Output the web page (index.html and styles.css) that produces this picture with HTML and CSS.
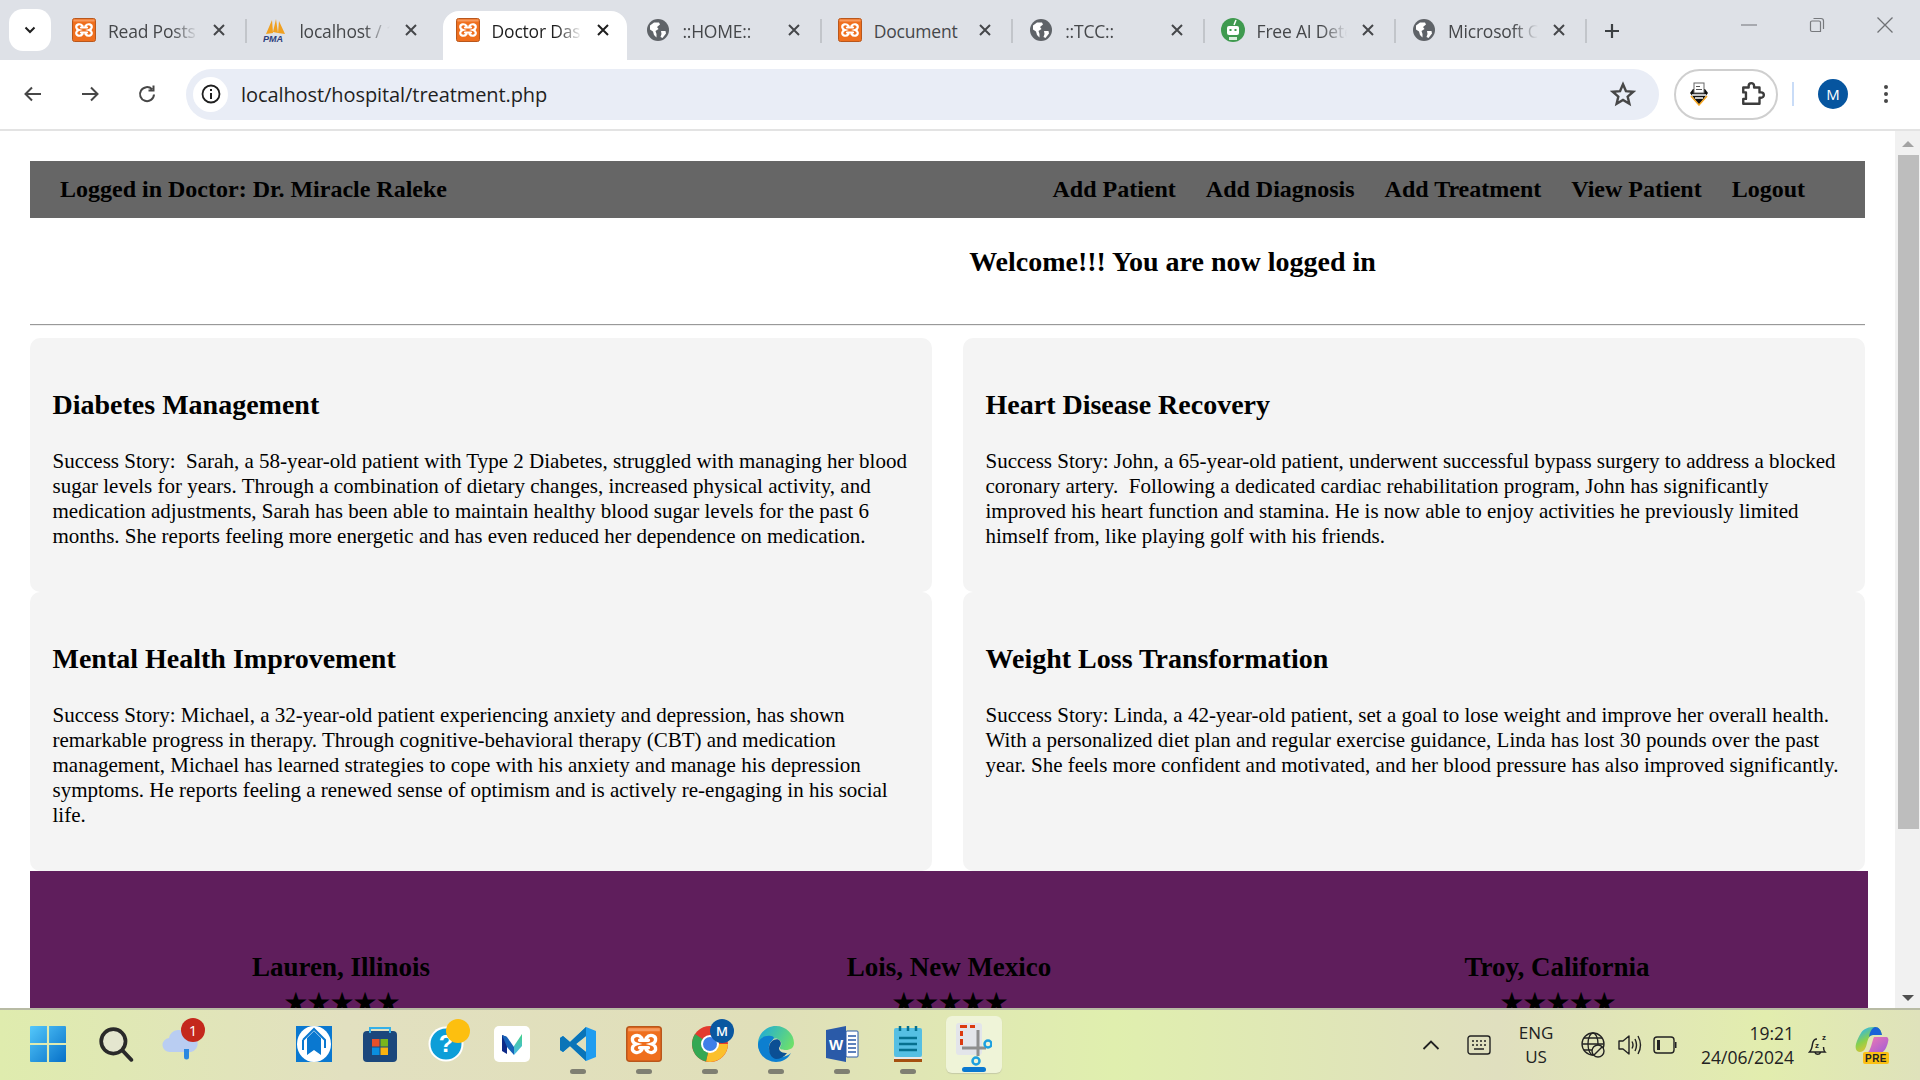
FILE: index.html
```html
<!DOCTYPE html>
<html lang="en">
<head>
<meta charset="utf-8">
<title>Doctor Dashboard</title>
<link rel="stylesheet" href="styles.css">
</head>
<body>
<svg class="defs" width="0" height="0" aria-hidden="true">
  <defs>
    <symbol id="xampp" viewBox="0 0 24 24">
      <rect x="0.500" y="0.500" width="23" height="23" rx="2" fill="#ef6f1e" stroke="#b9571c"/>
      <rect x="1.500" y="1.500" width="21" height="2" fill="#f79a5e"/>
      <path d="M10.500 8C8 4.800 3.800 6.500 4.300 9.500C4.600 11.300 7 12 7 12C7 12 4.600 12.700 4.300 14.500C3.800 17.500 8 19.200 10.500 16M13.500 8C16 4.800 20.200 6.500 19.700 9.500C19.400 11.300 17 12 17 12C17 12 19.400 12.700 19.700 14.500C20.200 17.500 16 19.200 13.500 16M9 9.500H15M9 14.500H15" fill="none" stroke="#fff" stroke-width="2.200" stroke-linecap="round"/>
    </symbol>
    <symbol id="globe" viewBox="0 0 24 24">
      <circle cx="12" cy="12" r="11" fill="#5f6368"/>
      <path d="M4 7.500L8 4.500H13L14 6.500L11 9L12.500 11L9.500 13L10.500 16V19.500L8 17L7 13.500L4 11.500ZM15 13H19.500L20 15.500L16.500 20L14.500 19L15.500 16Z" fill="#fff"/>
    </symbol>
    <symbol id="close" viewBox="0 0 14 14">
      <path d="M2 2L12 12M12 2L2 12" fill="none" stroke="currentColor" stroke-width="2"/>
    </symbol>
  </defs>
</svg>

<header class="tabstrip">
  <div class="tab-menu">
    <svg class="chev" viewBox="0 0 12 8"><path d="M1.500 1.500L6 6L10.500 1.500" fill="none" stroke="#1f1f1f" stroke-width="2"/></svg>
  </div>
  <div class="tab sep">
    <svg class="fav"><use href="#xampp"/></svg><span class="tab-title">Read Posts</span>
    <svg class="x"><use href="#close"/></svg>
  </div>
  <div class="tab">
    <svg class="fav" viewBox="0 0 24 24">
      <path d="M3 16L9 2L10 15ZM10 14L13 1L15 15ZM15 15L16 3L22 16Z" fill="#f0a020"/>
      <text x="0" y="24" class="pma">PMA</text>
    </svg><span class="tab-title">localhost / 127</span>
    <svg class="x"><use href="#close"/></svg>
  </div>
  <div class="tab active">
    <svg class="fav"><use href="#xampp"/></svg><span class="tab-title">Doctor Dashboard</span>
    <svg class="x"><use href="#close"/></svg>
  </div>
  <div class="tab sep">
    <svg class="fav"><use href="#globe"/></svg><span class="tab-title">::HOME::</span>
    <svg class="x"><use href="#close"/></svg>
  </div>
  <div class="tab sep">
    <svg class="fav"><use href="#xampp"/></svg><span class="tab-title doc">Document</span>
    <svg class="x"><use href="#close"/></svg>
  </div>
  <div class="tab sep">
    <svg class="fav"><use href="#globe"/></svg><span class="tab-title">::TCC::</span>
    <svg class="x"><use href="#close"/></svg>
  </div>
  <div class="tab sep">
    <svg class="fav" viewBox="0 0 24 24">
      <circle cx="12" cy="12" r="12" fill="#3f9a4f"/>
      <rect x="6" y="8" width="12" height="9" rx="2" fill="#fff"/>
      <rect x="8.500" y="11" width="2" height="2" fill="#3f9a4f"/><rect x="13.500" y="11" width="2" height="2" fill="#3f9a4f"/>
      <path d="M13 7L15 2" stroke="#fff" stroke-width="1.500"/>
      <path d="M8 19H16V22H8Z" fill="#d9eedc"/>
    </svg><span class="tab-title">Free AI Detector</span>
    <svg class="x"><use href="#close"/></svg>
  </div>
  <div class="tab sep">
    <svg class="fav"><use href="#globe"/></svg><span class="tab-title">Microsoft Copilot</span>
    <svg class="x"><use href="#close"/></svg>
  </div>
  <svg class="newtab" viewBox="0 0 16 16"><path d="M8 1V15M1 8H15" fill="none" stroke="#3c4043" stroke-width="2.200"/></svg>
  <div class="winctl">
    <svg viewBox="0 0 16 16"><path d="M0 8H16" stroke="#8a8c90" stroke-width="1.300"/></svg>
    <svg viewBox="0 0 16 16"><path d="M1.500 5.500a1.500 1.500 0 0 1 1.500-1.500h7a1.500 1.500 0 0 1 1.500 1.500v9H3a1.500 1.500 0 0 1-1.500-1.500ZM4.500 1.500H12A2.500 2.500 0 0 1 14.500 4V12" fill="none" stroke="#77797d" stroke-width="1.200"/></svg>
    <svg viewBox="0 0 16 16"><path d="M0.500 0.500L15.500 15.500M15.500 0.500L0.500 15.500" stroke="#6f7175" stroke-width="1.300"/></svg>
  </div>
</header>

<nav class="toolbar">
  <svg class="tool" viewBox="0 0 24 24"><path d="M20 12H5M11 5.500L4.500 12L11 18.500" fill="none" stroke="#474747" stroke-width="2"/></svg>
  <svg class="tool" viewBox="0 0 24 24"><path d="M4 12H19M13 5.500L19.500 12L13 18.500" fill="none" stroke="#474747" stroke-width="2"/></svg>
  <svg class="tool" viewBox="0 0 24 24"><path d="M19 12.500A7 7 0 1 1 17 7.200M18.500 3.500V8.500H13.500" fill="none" stroke="#474747" stroke-width="2"/></svg>
  <div class="omnibox">
    <span class="info">
      <svg viewBox="0 0 20 20"><circle cx="10" cy="10" r="8.500" fill="none" stroke="#1f1f1f" stroke-width="1.800"/><path d="M10 9V15M10 5V7" stroke="#1f1f1f" stroke-width="2"/></svg>
    </span>
    <span class="url">localhost/hospital/treatment.php</span>
    <svg class="star" viewBox="0 0 24 24"><path d="M12 3L14.700 9.300L21.500 9.900L16.300 14.400L17.900 21L12 17.500L6.100 21L7.700 14.400L2.500 9.900L9.300 9.300Z" fill="none" stroke="#474747" stroke-width="2.200"/></svg>
  </div>
  <div class="ext-pill">
    <svg class="ext nib" viewBox="0 0 20 24">
      <path d="M10 23L1 11L4 7H16L19 11Z" fill="#111"/><path d="M2 14L10 23L18 14" fill="none" stroke="#f5a623" stroke-width="1.500"/>
      <rect x="5" y="1" width="10" height="10" fill="#fff" stroke="#666"/><path d="M7 4.500H11M7 7.500H13" stroke="#555"/><path d="M3 13H17M6 16H14" stroke="#fff" stroke-width="1.500"/>
    </svg>
    <svg class="ext" viewBox="0 0 24 24"><path d="M3 6H8V4.500a2.500 2.500 0 0 1 5 0V6H18V10.500H19.500a2.500 2.500 0 0 1 0 5H18V21H3V16.500H5.500V10.500H3Z" fill="none" stroke="#3c3c3c" stroke-width="2.200" stroke-linejoin="round"/></svg>
  </div>
  <span class="tool-sep"></span>
  <span class="avatar">M</span>
  <svg class="dots" viewBox="0 0 4 20"><circle cx="2" cy="3" r="2" fill="#474747"/><circle cx="2" cy="10" r="2" fill="#474747"/><circle cx="2" cy="17" r="2" fill="#474747"/></svg>
</nav>

<div class="viewport">
  <main class="page">
    <div class="topnav">
      <span>Logged in Doctor: Dr. Miracle Raleke</span>
      <div class="navlinks">
        <span>Add Patient</span>
        <span>Add Diagnosis</span>
        <span>Add Treatment</span>
        <span>View Patient</span>
        <span>Logout</span>
      </div>
    </div>
    <h3 class="welcome">Welcome!!! You are now logged in</h3>
    <hr class="rule">
    <section class="cards">
      <article class="card">
        <h2>Diabetes Management</h2>
        <p>Success Story: &nbsp;Sarah, a 58-year-old patient with Type 2 Diabetes, struggled with managing her blood sugar levels for years. Through a combination of dietary changes, increased physical activity, and medication adjustments, Sarah has been able to maintain healthy blood sugar levels for the past 6 months. She reports feeling more energetic and has even reduced her dependence on medication.</p>
      </article>
      <article class="card">
        <h2>Heart Disease Recovery</h2>
        <p>Success Story: John, a 65-year-old patient, underwent successful bypass surgery to address a blocked coronary artery. &nbsp;Following a dedicated cardiac rehabilitation program, John has significantly improved his heart function and stamina. He is now able to enjoy activities he previously limited himself from, like playing golf with his friends.</p>
      </article>
      <article class="card">
        <h2>Mental Health Improvement</h2>
        <p>Success Story: Michael, a 32-year-old patient experiencing anxiety and depression, has shown remarkable progress in therapy. Through cognitive-behavioral therapy (CBT) and medication management, Michael has learned strategies to cope with his anxiety and manage his depression symptoms. He reports feeling a renewed sense of optimism and is actively re-engaging in his social life.</p>
      </article>
      <article class="card">
        <h2>Weight Loss Transformation</h2>
        <p>Success Story: Linda, a 42-year-old patient, set a goal to lose weight and improve her overall health. With a personalized diet plan and regular exercise guidance, Linda has lost 30 pounds over the past year. She feels more confident and motivated, and her blood pressure has also improved significantly.</p>
      </article>
    </section>
    <section class="reviews">
      <div class="review"><h3>Lauren, Illinois</h3><div class="stars">★★★★★</div></div>
      <div class="review"><h3>Lois, New Mexico</h3><div class="stars">★★★★★</div></div>
      <div class="review"><h3>Troy, California</h3><div class="stars">★★★★★</div></div>
    </section>
  </main>
  <aside class="scrollbar">
    <span class="arrow up"></span>
    <span class="thumb"></span>
    <span class="arrow down"></span>
  </aside>
</div>

<footer class="taskbar">
  <div class="slot">
    <svg class="tb" viewBox="0 0 34 34">
      <defs><linearGradient id="w" x1="0" y1="0" x2="1" y2="1"><stop offset="0" stop-color="#54c8fb"/><stop offset="1" stop-color="#0670c8"/></linearGradient></defs>
      <path d="M0 1a1 1 0 0 1 1-1H16V16H0ZM18 0H33a1 1 0 0 1 1 1V16H18ZM0 18H16V34H1a1 1 0 0 1-1-1ZM18 18H34V33a1 1 0 0 1-1 1H18Z" fill="url(#w)"/>
    </svg>
  </div>
  <div class="slot search">
    <svg class="tb" viewBox="0 0 34 34"><circle cx="14.500" cy="14.500" r="11.500" fill="#e4e6cf" stroke="#2a2a2a" stroke-width="3.500"/><path d="M23 23L31.500 32" stroke="#2a2a2a" stroke-width="3.500" stroke-linecap="round"/></svg>
  </div>
  <div class="slot">
    <svg class="tb" viewBox="0 0 36 34"><path d="M8 25a7 7 0 0 1-1-14a10 10 0 0 1 19-2a8 8 0 0 1 3 16Z" fill="#b9cdf2"/><path d="M22 22H27V30a2.500 2.500 0 0 1-5 0Z" fill="#2b88e0"/></svg>
    <span class="badge red">1</span>
  </div>
  <div class="slot-gap"></div>
  <div class="slot">
    <svg class="tb" viewBox="0 0 36 36"><rect width="36" height="36" fill="#0a78d0"/><ellipse cx="18" cy="18" rx="17" ry="18" fill="#fff"/><path d="M11 12L18 5L25 12V29L18 24L11 29Z" fill="#0a78d0"/><path d="M7 14L18 3L29 14V22" fill="none" stroke="#0a78d0" stroke-width="2"/><path d="M7 14V24" stroke="#0a78d0" stroke-width="2"/></svg>
  </div>
  <div class="slot">
    <svg class="tb" viewBox="0 0 36 36"><rect x="1" y="5" width="34" height="31" rx="4" fill="#1b477c"/><path d="M8 7V2H28V7" fill="none" stroke="#35b0e8" stroke-width="2"/><rect x="10" y="13" width="7.500" height="7.500" fill="#e6502a"/><rect x="18.500" y="13" width="7.500" height="7.500" fill="#7ab51d"/><rect x="10" y="21.500" width="7.500" height="7.500" fill="#0a8ee0"/><rect x="18.500" y="21.500" width="7.500" height="7.500" fill="#fbb20e"/></svg>
  </div>
  <div class="slot">
    <svg class="tb" viewBox="0 0 36 36"><circle cx="18" cy="18" r="17.500" fill="#fff"/><circle cx="18" cy="18" r="15.500" fill="#0d9ed8"/><text x="18" y="26" class="help">?</text></svg>
    <span class="badge yellow"></span>
  </div>
  <div class="slot">
    <svg class="tb" viewBox="0 0 36 36">
      <defs><linearGradient id="m" x1="0" y1="0" x2="0" y2="1"><stop offset="0" stop-color="#43d08a"/><stop offset="1" stop-color="#4bb8e8"/></linearGradient></defs>
      <rect width="36" height="36" rx="5" fill="#fff"/>
      <path d="M8 9L13 11V28L8 25Z" fill="#0d2a88"/>
      <path d="M8 9L13 11L20 21L20 29L13 21Z" fill="#1662b8"/>
      <path d="M28 8V20L20 29V20Z" fill="url(#m)"/>
    </svg>
  </div>
  <div class="slot on">
    <svg class="tb" viewBox="0 0 36 36"><path d="M26 1L36 5V31L26 35L10 20L3 26L0 24V12L3 10L10 16ZM26 10L16 18L26 26Z" fill="#1f9cf0"/><path d="M26 1L10 16L3 10L0 12V24L3 26L10 20L26 35V26L16 18L26 10Z" fill="#0a74b8"/></svg>
  </div>
  <div class="slot on">
    <svg class="tb"><use href="#xampp"/></svg>
  </div>
  <div class="slot on">
    <svg class="tb" viewBox="0 0 36 36"><circle cx="18" cy="18" r="18" fill="#e33b2e"/><path d="M18 18L36 18A18 18 0 0 1 14 35.500Z" fill="#fbc02d"/><path d="M18 18L14 35.500A18 18 0 0 1 3 8Z" fill="#34a853"/><circle cx="18" cy="18" r="9" fill="#fff"/><circle cx="18" cy="18" r="7" fill="#3f7fe8"/></svg>
    <span class="badge blue">M</span>
  </div>
  <div class="slot on">
    <svg class="tb" viewBox="0 0 36 36">
      <defs><linearGradient id="e" x1="0" y1="0" x2="1" y2="0.500"><stop offset="0" stop-color="#1aa7e0"/><stop offset="1" stop-color="#6ee06a"/></linearGradient></defs>
      <path d="M0 18C0 8 8 0 18 0C28 0 36 8 36 17C36 22 32 24 28 24C24 24 21 23 22 21C24 19 24 15 20 13C13 11 8 17 8 22C8 27 10 30 12 33C5 31 0 25 0 18Z" fill="url(#e)"/>
      <path d="M0 18C1 12 7 9 13 10C19 11 14 14 12 17C9 23 12 31 22 31C27 31 31 29 33 27C30 33 24 36 18 36C8 36 0 28 0 18Z" fill="#0d7fd0"/>
      <path d="M11 22C11 14 20 11 22 15C24 18 22 20 21 22C21 26 25 27 29 27C26 31 22 33 18 33C13 32 11 27 11 22Z" fill="#0b4f94"/>
    </svg>
  </div>
  <div class="slot on">
    <svg class="tb" viewBox="0 0 32 36"><path d="M0 4L20 0V36L0 32Z" fill="#2a5aa8"/><rect x="20" y="5" width="12" height="26" rx="1" fill="#fff" stroke="#2a5aa8"/><path d="M22 10H30M22 14H30M22 18H30M22 22H30M22 26H30" stroke="#2a5aa8" stroke-width="1.500"/><text x="10" y="24" class="word">W</text></svg>
  </div>
  <div class="slot on">
    <svg class="tb" viewBox="0 0 28 36"><rect y="2" width="28" height="29" rx="2" fill="#55bfe3"/><path d="M0 31H28V36H0Z" fill="#a5500f"/><path d="M0 31H28V33H0Z" fill="#e8e8e8"/><path d="M6 0V5M14 0V5M22 0V5" stroke="#05708f" stroke-width="2.500"/><path d="M5 12H23M5 18H23M5 24H23" stroke="#05708f" stroke-width="2.500"/></svg>
  </div>
  <div class="slot snip">
    <svg class="tb" viewBox="0 0 36 44"><rect x="0" y="1" width="26" height="32" rx="3" fill="#e3e5ea"/><path d="M4 3H11V6H4ZM14 3H19V6H14ZM4 9H7V14H4ZM4 17H7V23H4Z" fill="#dc3a10"/><path d="M22 8V26M6 26H30M22 26V34" stroke="#8e8e8e" stroke-width="3"/><circle cx="32" cy="22" r="3.500" fill="none" stroke="#1ca0e0" stroke-width="2.500"/><circle cx="20" cy="39" r="3.500" fill="none" stroke="#1ca0e0" stroke-width="2.500"/></svg>
  </div>

  <div class="tray">
    <svg class="t-chev" viewBox="0 0 18 10"><path d="M1.500 9L9 1.500L16.500 9" fill="none" stroke="#222" stroke-width="1.800"/></svg>
    <svg class="t-key" viewBox="0 0 24 20"><rect x="1" y="1" width="22" height="18" rx="2.500" fill="none" stroke="#222" stroke-width="1.400"/><path d="M5 6H7M9 6H11M13 6H15M17 6H19M5 10H7M9 10H11M13 10H15M17 10H19M7 14H17" stroke="#222" stroke-width="1.500"/></svg>
    <div class="lang"><span>ENG</span><span>US</span></div>
    <svg class="t-globe" viewBox="0 0 24 28"><circle cx="12" cy="13" r="11" fill="none" stroke="#222" stroke-width="1.300"/><ellipse cx="12" cy="13" rx="5" ry="11" fill="none" stroke="#222" stroke-width="1.300"/><path d="M1 13H23M3 7H21M3 19H21" stroke="#222" stroke-width="1.300"/><circle cx="17" cy="20" r="6" fill="#e1e3bd" stroke="#222" stroke-width="1.400"/><path d="M13 24L21 16" stroke="#222" stroke-width="1.400"/></svg>
    <svg class="t-vol" viewBox="0 0 24 24"><path d="M1 8H5L11 3V21L5 16H1Z" fill="none" stroke="#222" stroke-width="1.400" stroke-linejoin="round"/><path d="M14 8.500Q16 12 14 15.500M17 6Q20 12 17 18M20 3Q25 12 20 21" fill="none" stroke="#222" stroke-width="1.400"/></svg>
    <svg class="t-bat" viewBox="0 0 24 20"><rect x="1" y="2" width="20" height="16" rx="3" fill="none" stroke="#222" stroke-width="1.400"/><rect x="4" y="5" width="3" height="10" fill="#222"/><path d="M22 7H23.500V13H22Z" fill="#222"/></svg>
    <div class="clock"><span>19:21</span><span>24/06/2024</span></div>
    <svg class="t-bell" viewBox="0 0 22 26"><path d="M9 7C6 7 5 9 4.500 12C4 16 3.500 18 1.500 20H17C15.500 18.500 15.500 17 15.500 15M7 20.500a3 3 0 0 0 5.500 0" fill="none" stroke="#222" stroke-width="1.500"/><text x="7" y="16" class="zz">z</text><text x="14" y="8" class="zz">z</text></svg>
    <svg class="t-copilot" viewBox="0 0 34 38">
      <defs>
        <linearGradient id="c" x1="0" y1="0.200" x2="0.500" y2="1"><stop offset="0" stop-color="#2fb8e8"/><stop offset=".5" stop-color="#8bd04a"/><stop offset="1" stop-color="#f0c030"/></linearGradient>
        <linearGradient id="c2" x1="0" y1="0" x2="1" y2="1"><stop offset="0" stop-color="#f07ab0"/><stop offset="1" stop-color="#a05cd8"/></linearGradient>
      </defs>
      <path d="M6 7C9 2 14 1 20 1C24 1 26 4 27 9H18C15 9 13 12 12 17C11 22 9 26 5 26C1 26 0 22 1 18C2 14 4 10 6 7Z" fill="url(#c)"/>
      <path d="M20 1C24 1 26 4 27 9H18C16 9 15 10 14 11C15 5 17 2 20 1Z" fill="#1a62d8"/>
      <path d="M19 11H31C33 11 34 13 33 16C32 21 29 27 25 27H12C16 25 17 15 19 11Z" fill="url(#c2)"/>
      <rect x="8" y="26" width="26" height="12" rx="2" fill="#fbc013"/>
      <text x="21" y="36" class="pre">PRE</text>
    </svg>
  </div>
</footer>
</body>
</html>
```

FILE: styles.css
```css
* { box-sizing: border-box; }
html, body { margin: 0; height: 100%; overflow: hidden; }
body {
  display: flex;
  flex-direction: column;
  width: 1920px;
  height: 1080px;
  background: #fff;
  font-family: "Liberation Serif", "Times New Roman", serif;
  color: #000;
}
.defs { position: absolute; }

/* Tab strip */
.tabstrip {
  height: 60px;
  flex: none;
  display: flex;
  align-items: flex-end;
  background: #dee1e7;
  padding-left: 9px;
  font-family: "Open Sans", "Noto Sans", sans-serif;
}
.tab-menu {
  width: 42px;
  height: 42px;
  margin: 0 5px 9px 0;
  background: #fff;
  border-radius: 14px;
  display: flex;
  align-items: center;
  justify-content: center;
}
.chev { width: 12px; height: 8px; }
.tab {
  position: relative;
  width: 191.400px;
  height: 49px;
  flex: none;
  display: flex;
  align-items: center;
  padding: 0 21px 11px 16px;
  color: #45474a;
  border-radius: 16px 16px 0 0;
  font-size: 17.500px;
}
.tab.sep::after {
  content: "";
  position: absolute;
  right: 0;
  top: 8px;
  width: 2px;
  height: 24px;
  background: #c2c5ca;
}
.tab.active {
  width: 184px;
  margin: 0 3.800px;
  padding: 0 17px 11px 13px;
  background: #fff;
  color: #1f1f1f;
}
.fav { width: 24px; height: 24px; flex: none; }
.tab-title {
  flex: 1;
  min-width: 0;
  margin-left: 12px;
  margin-top: 1px;
  white-space: nowrap;
  overflow: hidden;
  letter-spacing: -0.2px;
  -webkit-mask-image: linear-gradient(90deg, #000 72%, transparent 100%);
  mask-image: linear-gradient(90deg, #000 72%, transparent 100%);
}
.tab-title.doc { -webkit-mask-image: none; mask-image: none; }
.x { width: 14px; height: 14px; flex: none; margin-left: 14px; color: #45474a; }
.active .x { color: #1f1f1f; }
.pma { font: italic bold 9px "Liberation Sans", sans-serif; fill: #2c3e7c; }
.newtab { width: 16px; height: 16px; margin: 0 0 21px 17px; flex: none; }
.winctl {
  margin-left: auto;
  display: flex;
  align-items: center;
  gap: 52px;
  padding: 0 27px 0 0;
  height: 60px;
  align-self: flex-start;
}
.winctl svg { width: 16px; height: 16px; margin-top: -10px; }

/* Toolbar */
.toolbar {
  height: 71px;
  flex: none;
  display: flex;
  align-items: center;
  background: #fff;
  border-bottom: 2px solid #e3e3e3;
  padding: 0 0 1px 21px;
  border-radius: 12px 12px 0 0;
}
.tool { width: 24px; height: 24px; flex: none; margin-right: 33px; }
.omnibox {
  width: 1473px;
  height: 51px;
  margin-left: -6px;
  flex: none;
  display: flex;
  align-items: center;
  background: #e9edf6;
  border-radius: 26px;
  padding: 0 23px 0 7px;
}
.info {
  width: 35px;
  height: 35px;
  border-radius: 50%;
  background: #fff;
  display: flex;
  align-items: center;
  justify-content: center;
  flex: none;
}
.info svg { width: 20px; height: 20px; }
.url {
  margin-left: 13px;
  flex: 1;
  font-family: "Open Sans", "Noto Sans", sans-serif;
  font-size: 20px;
  letter-spacing: -0.080px;
  color: #1f1f1f;
}
.star { width: 26px; height: 26px; flex: none; }
.ext-pill {
  width: 104px;
  height: 51px;
  margin-left: 15px;
  flex: none;
  display: flex;
  align-items: center;
  justify-content: space-between;
  padding: 0 10px 0 13px;
  border: 2px solid #cfcfcf;
  border-radius: 26px;
}
.ext { width: 26px; height: 28px; }
.ext.nib { width: 20px; height: 24px; }
.tool-sep { width: 2px; height: 24px; margin: 0 24px 0 14px; background: #c9dcf7; flex: none; }
.avatar {
  width: 30px;
  height: 30px;
  border-radius: 50%;
  background: #06559f;
  color: #fff;
  font: 15px/30px "Open Sans", sans-serif;
  text-align: center;
  flex: none;
}
.dots { width: 4px; height: 20px; margin-left: 36px; flex: none; }

/* Page */
.viewport {
  flex: 1;
  min-height: 0;
  display: flex;
  overflow: hidden;
}
.page {
  width: 1895px;
  flex: none;
  padding: 30px 0 0 30px;
  overflow: hidden;
}
.topnav {
  width: 1835px;
  height: 57px;
  background: #666;
  display: flex;
  align-items: center;
  justify-content: space-between;
  padding: 0 60px 0 30px;
  font-size: 24px;
  font-weight: bold;
}
.navlinks { display: flex; gap: 30px; }
.welcome {
  width: 1835px;
  height: 106px;
  margin: 0;
  padding: 31px 0 0 450px;
  font-size: 28px;
  line-height: 26px;
  text-align: center;
}
.rule {
  width: 1835px;
  height: 2px;
  margin: 0 0 12px;
  border: 0;
  border-top: 1px solid #999;
  border-bottom: 1px solid #eee;
}
.cards {
  width: 1835px;
  display: grid;
  grid-template-columns: 902px 902px;
  grid-template-rows: 254px 279px;
  column-gap: 31px;
}
.card {
  background: #f4f4f4;
  border-radius: 10px;
  padding: 49px 22px 0 22.500px;
}
.card h2 {
  margin: 0 0 27px;
  font-size: 28px;
  line-height: 35px;
}
.card p {
  margin: 0;
  font-size: 21px;
  line-height: 25px;
}
.reviews {
  width: 1838px;
  height: 300px;
  background: #5f1e5c;
  display: grid;
  grid-template-columns: repeat(3, 608px);
  padding: 79px 7px 0;
}
.review { text-align: center; }
.review h3 {
  margin: 0;
  font-size: 27px;
  line-height: 34px;
}
.stars {
  font-family: "DejaVu Sans", sans-serif;
  font-size: 28px;
  letter-spacing: -2px;
  line-height: 34px;
  margin-top: 2px;
}

/* Scrollbar */
.scrollbar {
  width: 25px;
  flex: none;
  background: #f1f1f1;
  display: flex;
  flex-direction: column;
  align-items: center;
  padding: 0 0 0 1px;
  position: relative;
}
.thumb { width: 21px; height: 674px; background: #bdbdbd; margin-top: 8px; }
.arrow { width: 0; height: 0; border-left: 6px solid transparent; border-right: 6px solid transparent; }
.arrow.up { border-bottom: 6px solid #a3a3a3; margin-top: 10px; }
.arrow.down { border-top: 6px solid #505050; margin-top: auto; margin-bottom: 7px; }

/* Taskbar */
.taskbar {
  height: 72px;
  flex: none;
  display: flex;
  align-items: center;
  padding-left: 15px;
  border-top: 2px solid #b8bba4;
  background: linear-gradient(90deg, #dfecae 0%, #e2e0c0 18%, #e0dfb9 40%, #e0efae 58%, #e0dfbf 78%, #e2edae 92%, #dfe2bb 100%);
}
.slot {
  width: 66px;
  height: 100%;
  flex: none;
  position: relative;
  display: flex;
  align-items: center;
  justify-content: center;
}
.slot.search .tb { margin-left: 3px; }
.slot-gap { width: 68px; flex: none; }
.tb { width: 36px; height: 36px; margin-top: -2px; }
.slot.on::after {
  content: "";
  position: absolute;
  left: 25px;
  bottom: 6px;
  width: 16px;
  height: 5px;
  border-radius: 3px;
  background: #7f7f72;
}
.slot.snip { width: 56px; height: 57px; margin-left: 5px; margin-top: -2px; border-radius: 6px; background: #eff4d8; box-shadow: 0 1px 1px #c5caa6; }
.slot.snip::after {
  content: "";
  position: absolute;
  left: 16px;
  bottom: 1px;
  width: 24px;
  height: 5px;
  border-radius: 3px;
  background: #0a78d0;
}
.slot.snip .tb { height: 44px; margin: 0; }
.badge {
  position: absolute;
  border-radius: 50%;
  text-align: center;
  font-family: "Open Sans", sans-serif;
  color: #fff;
}
.badge.red { width: 24px; height: 24px; right: 8px; top: 8px; background: #c4281c; font-size: 15px; line-height: 24px; }
.badge.yellow { width: 24px; height: 24px; right: 9px; top: 9px; background: #fdbf0f; }
.badge.blue { width: 24px; height: 24px; right: 9px; top: 9px; background: #0a57a0; font-size: 13px; line-height: 24px; font-weight: 600; }
.help { font: bold 24px "Liberation Sans", sans-serif; fill: #fff; text-anchor: middle; }
.word { font: bold 15px "Liberation Sans", sans-serif; fill: #fff; text-anchor: middle; }
.zz { font: bold 8px "Liberation Sans", sans-serif; fill: #222; }
.pre { font: bold 10px "Liberation Sans", sans-serif; fill: #222; text-anchor: middle; letter-spacing: 0.5px; }

.tray {
  margin-left: auto;
  display: flex;
  align-items: center;
  padding-right: 31px;
  font-family: "Open Sans", "Noto Sans", sans-serif;
  font-size: 17.500px;
  line-height: 24px;
  color: #222;
}
.t-chev { width: 18px; height: 10px; }
.t-key { width: 24px; height: 20px; margin-left: 27px; }
.lang { width: 50px; margin-left: 20px; display: flex; flex-direction: column; align-items: center; font-size: 17px; }
.t-globe { width: 24px; height: 28px; margin-left: 20px; }
.t-vol { width: 24px; height: 24px; margin-left: 13px; }
.t-bat { width: 24px; height: 20px; margin-left: 11px; }
.clock { width: 110px; margin-left: 7px; display: flex; flex-direction: column; align-items: flex-end; }
.t-bell { width: 22px; height: 26px; margin-left: 14px; }
.t-copilot { width: 34px; height: 38px; margin-left: 25px; }
```
